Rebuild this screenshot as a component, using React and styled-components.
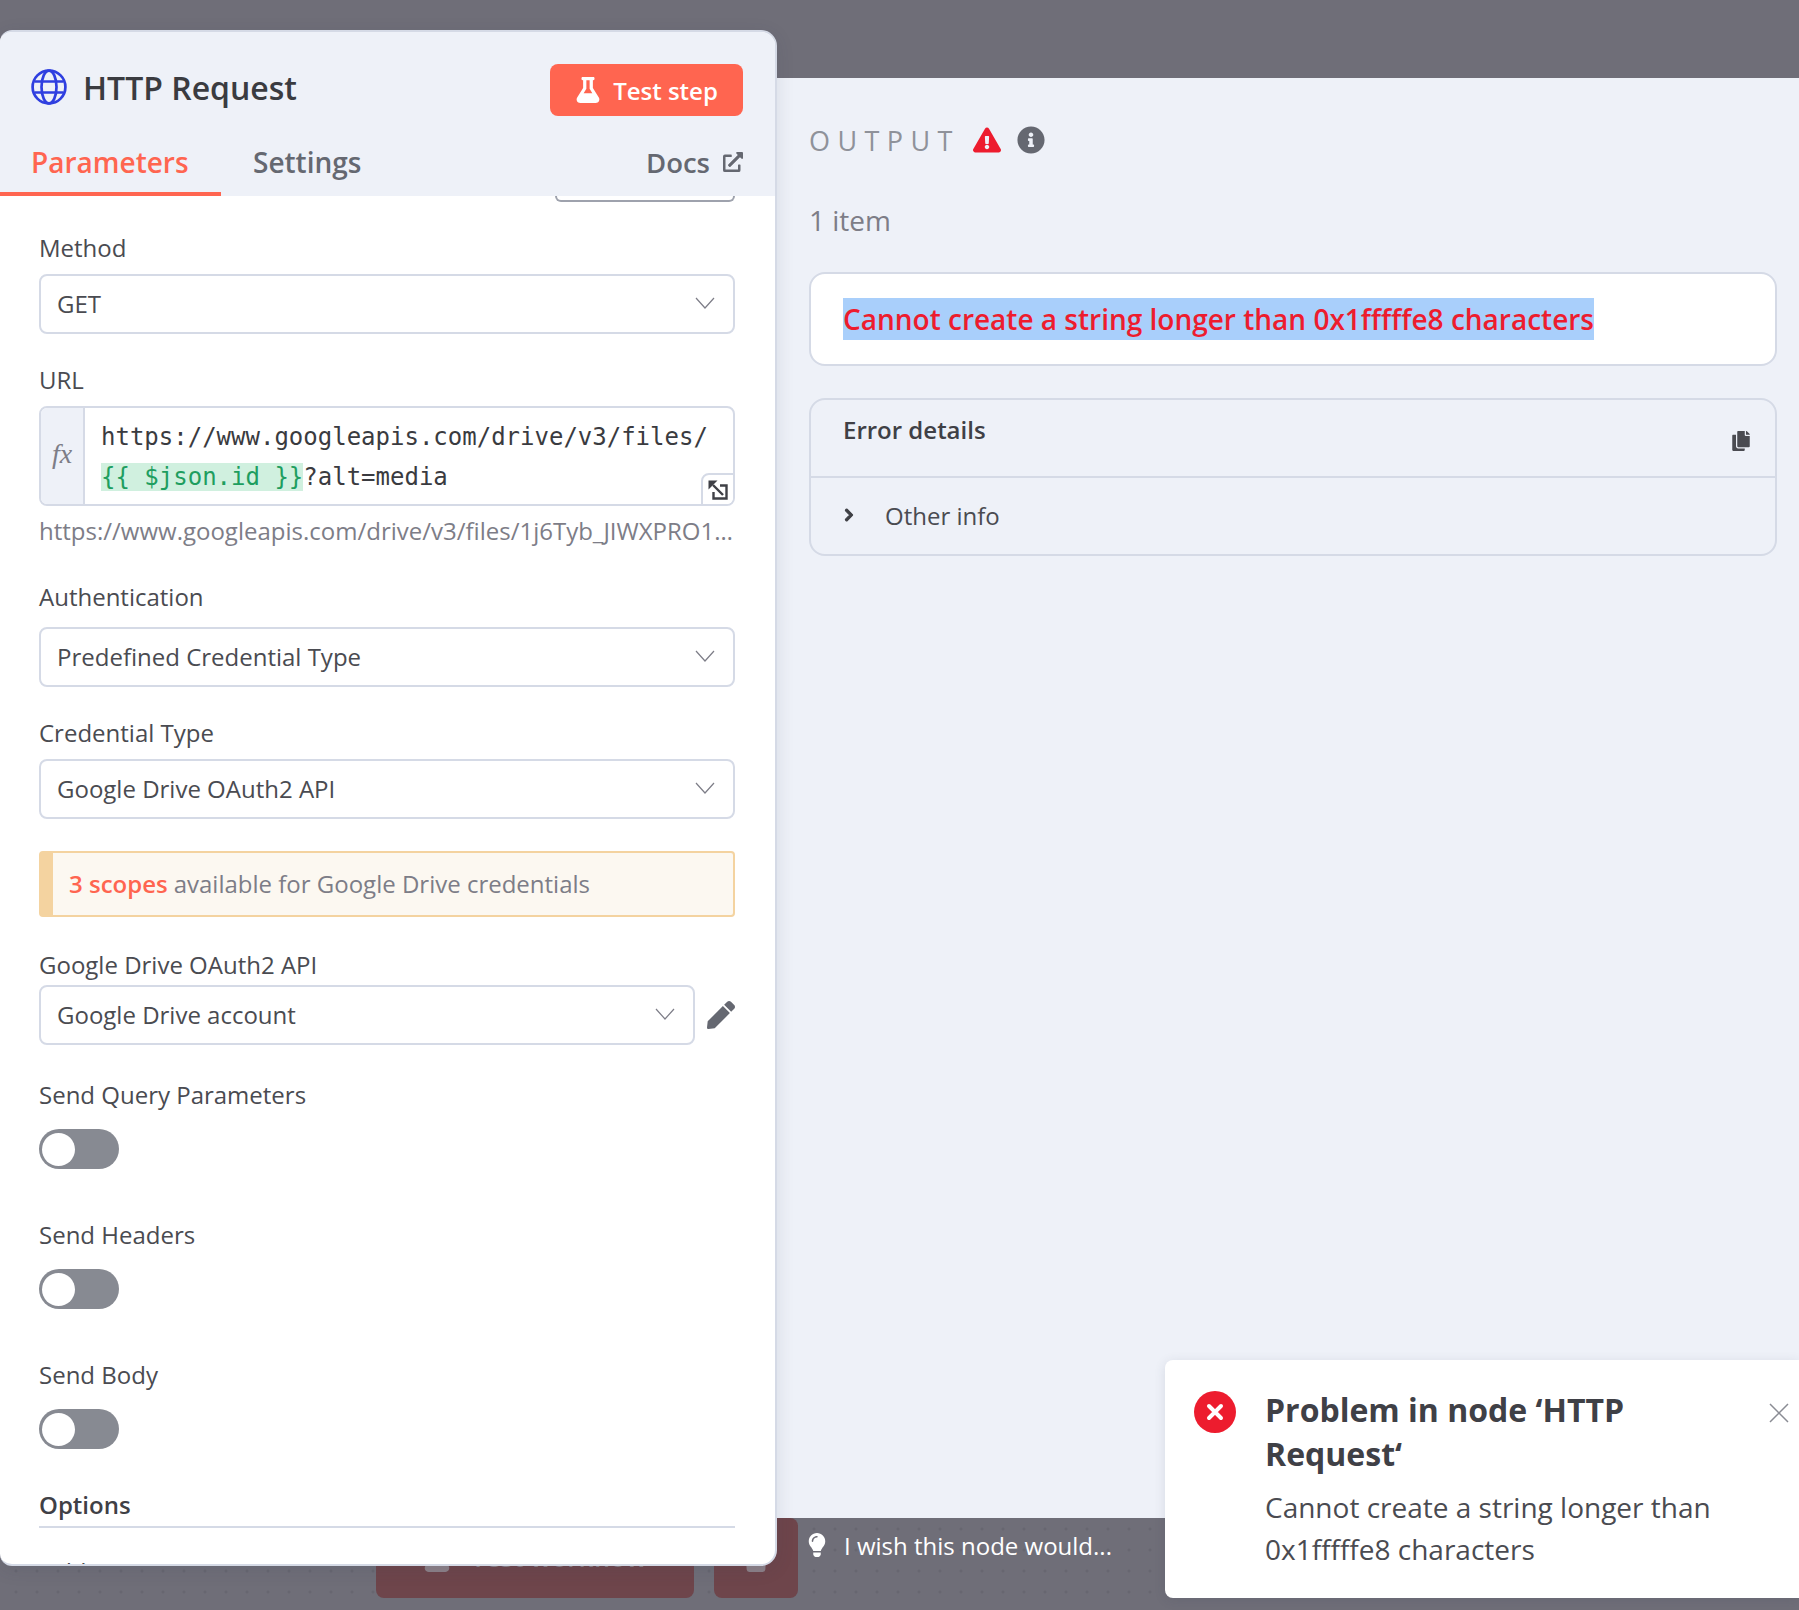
import React from "react";
import styled, { createGlobalStyle } from "styled-components";
import {
  FaFlask,
  FaExternalLinkAlt,
  FaExclamationTriangle,
  FaInfoCircle,
  FaCopy,
  FaPen,
  FaChevronRight,
  FaLightbulb,
  FaTrash,
} from "react-icons/fa";

const Global = createGlobalStyle`
  html, body { margin: 0; padding: 0; background: #6f6e78; }
  * { box-sizing: border-box; }
  body { font-family: "Open Sans", "Liberation Sans", sans-serif; }
`;

const Canvas = styled.div`
  position: relative;
  display: flex;
  align-items: flex-start;
  width: 1799px;
  height: 1610px;
  overflow: hidden;
  background-color: #6f6e78;
  background-image:
    linear-gradient(#6f6e78 0, #6f6e78 1500px, transparent 1500px),
    radial-gradient(circle, #64636d 1px, transparent 1.2px);
  background-size: 100% 100%, 21px 21px;
  background-position: 0 0, 5.5px 6.5px;
`;

const NodePanel = styled.section`
  position: relative;
  z-index: 3;
  flex: 0 0 777px;
  height: 1536px;
  margin-top: 30px;
  display: flex;
  flex-direction: column;
  overflow: hidden;
  background: #fff;
  border: 2px solid #d5dae6;
  border-left: 0;
  border-radius: 12px 16px 16px 12px;
  box-shadow: 0 4px 18px rgba(50, 61, 85, 0.12);
`;

const PanelHeader = styled.header`
  flex: none;
  background: #eef1f8;
`;

const TitleRow = styled.div`
  display: flex;
  align-items: center;
  justify-content: space-between;
  height: 84px;
  padding: 32px 32px 0 31px;
`;

const TitleGroup = styled.div`
  display: flex;
  align-items: center;
  gap: 16px;
`;

const GlobeMark = styled.span`
  display: flex;
  margin-top: -6px;
`;

const Title = styled.h1`
  margin: 0 0 4px;
  font-size: 32px;
  font-weight: 600;
  line-height: 44px;
  color: #3a3b40;
`;

const TestButton = styled.button`
  display: flex;
  align-items: center;
  justify-content: center;
  gap: 12px;
  width: 193px;
  height: 52px;
  border: 0;
  border-radius: 8px;
  background: #ff6550;
  color: #fff;
  font-family: inherit;
  font-size: 24px;
  font-weight: 600;
`;

const Tabs = styled.nav`
  display: flex;
  align-items: stretch;
  height: 80px;
  padding-top: 14px;
`;

const Tab = styled.div`
  display: flex;
  align-items: center;
  height: 66px;
  padding: ${(p) => (p.$active ? "2px 0 0 31px" : "2px 32px 0")};
  ${(p) => p.$active && "width: 221px;"}
  font-size: 28px;
  font-weight: 600;
  color: ${(p) => (p.$active ? "#ff6550" : "#656871")};
  border-bottom: 4px solid ${(p) => (p.$active ? "#ff6550" : "transparent")};
`;

const DocsTab = styled(Tab)`
  margin-left: auto;
  gap: 13px;
  font-size: 27.5px;
  color: #656871;
`;

const FormBody = styled.div`
  flex: 1;
  min-height: 0;
  overflow: hidden;
  padding: 0 40px 0 39px;
  display: flex;
  flex-direction: column;

  & > * {
    flex: none;
  }
`;

const ClippedBox = styled.div`
  align-self: flex-end;
  width: 180px;
  height: 6px;
  border: 2px solid #9ea2ad;
  border-top: 0;
  border-radius: 0 0 8px 8px;
`;

const Label = styled.label`
  display: block;
  margin-top: ${(p) => p.$top}px;
  margin-bottom: ${(p) => p.$gap}px;
  font-size: 24px;
  line-height: 32px;
  color: #4a4b51;
`;

const SelectRow = styled.div`
  display: flex;
  align-items: center;
  gap: 12px;
`;

const Select = styled.div`
  flex: 1;
  display: flex;
  align-items: center;
  justify-content: space-between;
  height: 60px;
  padding: 0 18px 2px 16px;
  border: 2px solid #d5dae6;
  border-radius: 8px;
  background: #fff;
  font-size: 24px;
  color: #4a4b51;
`;

const UrlBox = styled.div`
  position: relative;
  display: flex;
  height: 100px;
  border: 2px solid #d5dae6;
  border-radius: 8px;
  overflow: hidden;
`;

const FxCell = styled.div`
  flex: 0 0 44px;
  display: flex;
  align-items: center;
  justify-content: center;
  padding-bottom: 4px;
  background: #eef1f8;
  border-right: 2px solid #d5dae6;
  font-family: "Liberation Serif", serif;
  font-style: italic;
  font-size: 28px;
  color: #7d7d87;
`;

const UrlCode = styled.div`
  padding: 9px 0 0 16px;
  font-family: "DejaVu Sans Mono", monospace;
  font-size: 24px;
  line-height: 40px;
  color: #3a3b40;
  white-space: pre;
`;

const Expression = styled.span`
  display: inline-block;
  height: 28px;
  line-height: 28px;
  background: #d0f0df;
  color: #1e9e5f;
`;

const ExpandButton = styled.div`
  position: absolute;
  right: -2px;
  bottom: -2px;
  width: 34px;
  height: 33px;
  display: flex;
  align-items: center;
  justify-content: center;
  background: #fff;
  border: 2px solid #d5dae6;
  border-top-left-radius: 8px;
`;

const Hint = styled.div`
  margin-top: 9px;
  font-size: 24px;
  line-height: 32px;
  color: #7d7d87;
  white-space: nowrap;
  overflow: hidden;
  text-overflow: ellipsis;
`;

const Notice = styled.div`
  display: flex;
  align-items: center;
  height: 66px;
  margin-top: 32px;
  padding: 0 0 2px 16px;
  border: 2px solid #f4d3a0;
  border-left: 14px solid #f4d3a0;
  border-radius: 4px;
  background: #fcf8f1;
  font-size: 24px;
  color: #7d7d87;
`;

const NoticeStrong = styled.span`
  font-weight: 600;
  color: #ff6550;
  margin-right: 6px;
`;

const Toggle = styled.div`
  display: flex;
  align-items: center;
  width: 80px;
  height: 40px;
  padding-left: 3px;
  border-radius: 20px;
  background: #878a92;
`;

const Knob = styled.div`
  width: 33px;
  height: 33px;
  border-radius: 50%;
  background: #fff;
`;

const SectionTitle = styled.div`
  margin-top: ${(p) => p.$top}px;
  padding-bottom: 5px;
  border-bottom: 2px solid #d5dae6;
  font-size: 24px;
  font-weight: 600;
  line-height: 32px;
  color: #3f4046;
`;

const ClippedText = styled.div`
  margin-top: 28px;
  margin-left: 3px;
  font-size: 24px;
  line-height: 32px;
  color: #4a4b51;
`;

const RightColumn = styled.div`
  flex: 1;
  min-width: 0;
  margin-top: 78px;
  display: flex;
  flex-direction: column;
`;

const OutputPanel = styled.main`
  height: 1440px;
  padding: 0 22px 0 32px;
  background: #eef1f8;
  display: flex;
  flex-direction: column;
`;

const OutputHead = styled.div`
  display: flex;
  align-items: center;
  height: 36px;
  margin-top: 44px;
`;

const OutputTitle = styled.span`
  font-size: 27px;
  font-weight: 500;
  letter-spacing: 7.4px;
  color: #8f929a;
  margin-right: 13px;
`;

const InfoGap = styled.span`
  display: inline-flex;
  margin-left: 16px;
`;

const ItemCount = styled.div`
  margin-top: 44px;
  font-size: 28px;
  line-height: 36px;
  color: #7d7d87;
`;

const ErrorBox = styled.div`
  height: 94px;
  margin-top: 34px;
  display: flex;
  align-items: center;
  padding-left: 32px;
  background: #fff;
  border: 2px solid #d5dae6;
  border-radius: 16px;
`;

const ErrorMessage = styled.span`
  display: block;
  height: 42px;
  line-height: 42px;
  font-size: 28px;
  font-weight: 600;
  color: #ed1c2e;
  background: #a9cffb;
  white-space: nowrap;
`;

const DetailsBox = styled.div`
  height: 158px;
  margin-top: 32px;
  border: 2px solid #d5dae6;
  border-radius: 16px;
  display: flex;
  flex-direction: column;
`;

const DetailsHead = styled.div`
  flex: 0 0 78px;
  display: flex;
  justify-content: space-between;
  padding: 14px 24px 0 32px;
  border-bottom: 2px solid #d5dae6;
`;

const DetailsTitle = styled.span`
  font-size: 24px;
  line-height: 32px;
  font-weight: 600;
  color: #3f4046;
`;

const CopyWrap = styled.span`
  display: inline-flex;
  margin-top: 17px;
`;

const DetailsRow = styled.div`
  flex: 1;
  display: flex;
  align-items: center;
  gap: 29px;
  padding: 0 0 2px 31px;
  font-size: 24px;
  color: #4a4b51;
`;

const BoldChevron = styled(FaChevronRight)`
  stroke: #3f4046;
  stroke-width: 40px;
  overflow: visible;
`;

const FeedbackBar = styled.div`
  display: flex;
  align-items: center;
  gap: 15px;
  height: 54px;
  padding-left: 28px;
  font-size: 24px;
  color: #fff;
`;

const RunButton = styled.div`
  position: absolute;
  z-index: 0;
  left: ${(p) => p.$left}px;
  top: 1518px;
  width: ${(p) => p.$w}px;
  height: 80px;
  display: flex;
  align-items: center;
  justify-content: center;
  gap: 20px;
  border-radius: 8px;
  background: #6e454b;
  color: #8c8088;
  font-size: 26px;
  font-weight: 600;
  white-space: nowrap;
`;

const RunLabel = styled.span`
  margin-bottom: 3px;
`;

const Toast = styled.aside`
  position: absolute;
  z-index: 5;
  left: 1165px;
  top: 1360px;
  width: 634px;
  height: 238px;
  padding: 28px 60px 0 100px;
  background: #fff;
  border-radius: 8px 0 0 8px;
  box-shadow: 0 2px 12px rgba(50, 61, 85, 0.12);
`;

const ToastIcon = styled.span`
  position: absolute;
  left: 29px;
  top: 31px;
  display: flex;
`;

const ToastClose = styled.span`
  position: absolute;
  right: 10px;
  top: 43px;
  display: flex;
`;

const ToastTitle = styled.h2`
  margin: 0;
  font-size: 32px;
  font-weight: 700;
  line-height: 44px;
  color: #3f4046;
`;

const ToastBody = styled.p`
  margin: 10px 0 0;
  font-size: 28px;
  line-height: 42px;
  color: #4a4b51;
`;

const Chevron = () => (
  <svg width="20" height="12" viewBox="0 0 20 12" fill="none" stroke="#7d7d87" strokeWidth="1.2">
    <path d="M1 1l9 10 9-10" />
  </svg>
);

const Globe = () => (
  <svg width="36" height="36" viewBox="0 0 36 36" fill="none" stroke="#2f3fe0" strokeWidth="2.7">
    <circle cx="18" cy="18" r="16.4" />
    <ellipse cx="18" cy="18" rx="7.5" ry="16.4" />
    <path d="M3.5 12.5h29M3.5 23.5h29" />
  </svg>
);

const ExpandIcon = () => (
  <svg width="20" height="20" viewBox="0 0 20 20" fill="none" stroke="#3f4046" strokeWidth="2.4">
    <path d="M5 5l10 10" />
    <path d="M0.5 0.5h9l-9 9z" fill="#3f4046" stroke="none" />
    <path d="M12 5.5h6.5v13H5.5V12" />
  </svg>
);

const CloseIcon = () => (
  <svg width="20" height="20" viewBox="0 0 20 20" stroke="#8a8c94" strokeWidth="1.5">
    <path d="M1 1l18 18M19 1L1 19" />
  </svg>
);

const ErrorIcon = () => (
  <svg width="42" height="42" viewBox="0 0 42 42">
    <circle cx="21" cy="21" r="21" fill="#ed1c2e" />
    <path d="M15 15l12 12M27 15L15 27" stroke="#fff" strokeWidth="4" strokeLinecap="round" />
  </svg>
);

const SelectField = ({ label, top, gap, value }) => (
  <>
    <Label $top={top} $gap={gap}>{label}</Label>
    <SelectRow>
      <Select>
        {value}
        <Chevron />
      </Select>
    </SelectRow>
  </>
);

const ToggleField = ({ label, top, gap }) => (
  <>
    <Label $top={top} $gap={gap}>{label}</Label>
    <Toggle>
      <Knob />
    </Toggle>
  </>
);

export default function App() {
  return (
    <Canvas>
      <Global />
      <RunButton $left={376} $w={318}>
        <FaFlask size={28} />
        <RunLabel>Test workflow</RunLabel>
      </RunButton>
      <RunButton $left={714} $w={84}>
        <FaTrash size={28} />
      </RunButton>

      <NodePanel>
        <PanelHeader>
          <TitleRow>
            <TitleGroup>
              <GlobeMark>
                <Globe />
              </GlobeMark>
              <Title>HTTP Request</Title>
            </TitleGroup>
            <TestButton>
              <FaFlask size={26} />
              Test step
            </TestButton>
          </TitleRow>
          <Tabs>
            <Tab $active>Parameters</Tab>
            <Tab>Settings</Tab>
            <DocsTab>
              Docs
              <FaExternalLinkAlt size={20} />
            </DocsTab>
          </Tabs>
        </PanelHeader>
        <FormBody>
          <ClippedBox />
          <SelectField label="Method" top={30} gap={10} value="GET" />
          <Label $top={30} $gap={10}>URL</Label>
          <UrlBox>
            <FxCell>fx</FxCell>
            <UrlCode>
              {"https://www.googleapis.com/drive/v3/files/\n"}
              <Expression>{"{{ $json.id }}"}</Expression>
              {"?alt=media"}
            </UrlCode>
            <ExpandButton>
              <ExpandIcon />
            </ExpandButton>
          </UrlBox>
          <Hint>https://www.googleapis.com/drive/v3/files/1j6Tyb_JIWXPRO1sKmZ3dLqAo9vNcYtE8</Hint>
          <SelectField label="Authentication" top={34} gap={14} value="Predefined Credential Type" />
          <SelectField label="Credential Type" top={30} gap={10} value="Google Drive OAuth2 API" />
          <Notice>
            <NoticeStrong>3 scopes</NoticeStrong> available for Google Drive credentials
          </Notice>
          <Label $top={32} $gap={4}>Google Drive OAuth2 API</Label>
          <SelectRow>
            <Select>
              Google Drive account
              <Chevron />
            </Select>
            <FaPen size={28} color="#656871" />
          </SelectRow>
          <ToggleField label="Send Query Parameters" top={34} gap={18} />
          <ToggleField label="Send Headers" top={50} gap={18} />
          <ToggleField label="Send Body" top={50} gap={18} />
          <SectionTitle $top={40}>Options</SectionTitle>
          <ClippedText>Add option</ClippedText>
        </FormBody>
      </NodePanel>

      <RightColumn>
        <OutputPanel>
          <OutputHead>
            <OutputTitle>OUTPUT</OutputTitle>
            <FaExclamationTriangle size={28} color="#ed1c2e" />
            <InfoGap>
              <FaInfoCircle size={28} color="#656871" />
            </InfoGap>
          </OutputHead>
          <ItemCount>1 item</ItemCount>
          <ErrorBox>
            <ErrorMessage>Cannot create a string longer than 0x1fffffe8 characters</ErrorMessage>
          </ErrorBox>
          <DetailsBox>
            <DetailsHead>
              <DetailsTitle>Error details</DetailsTitle>
              <CopyWrap>
                <FaCopy size={20} color="#4a4b51" />
              </CopyWrap>
            </DetailsHead>
            <DetailsRow>
              <BoldChevron size={14} color="#3f4046" />
              Other info
            </DetailsRow>
          </DetailsBox>
        </OutputPanel>
        <FeedbackBar>
          <FaLightbulb size={24} />
          I wish this node would...
        </FeedbackBar>
      </RightColumn>

      <Toast>
        <ToastIcon>
          <ErrorIcon />
        </ToastIcon>
        <ToastClose>
          <CloseIcon />
        </ToastClose>
        <ToastTitle>Problem in node ‘HTTP Request‘</ToastTitle>
        <ToastBody>Cannot create a string longer than 0x1fffffe8 characters</ToastBody>
      </Toast>
    </Canvas>
  );
}
